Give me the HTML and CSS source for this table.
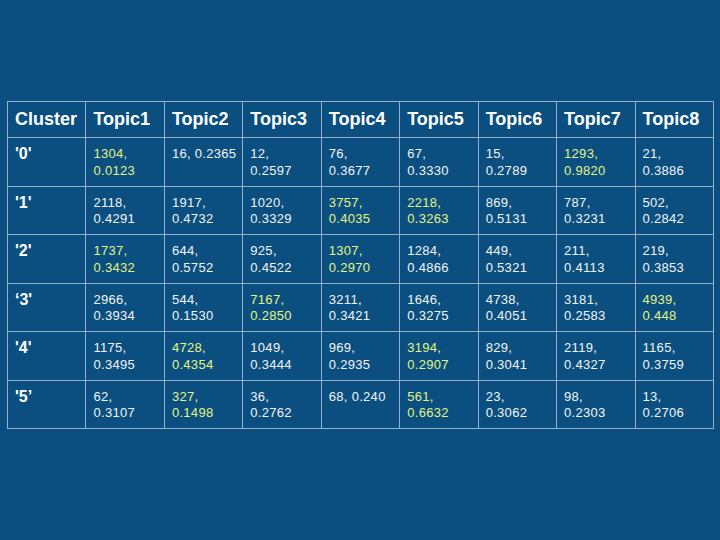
FILE: index.html
```html
<!DOCTYPE html>
<html>
<head>
<meta charset="utf-8">
<link rel="stylesheet" href="styles.css">
</head>
<body>
<div class="slide">
  <table class="grid">
    <thead>
      <tr>
        <th>Cluster</th><th>Topic1</th><th>Topic2</th><th>Topic3</th><th>Topic4</th><th>Topic5</th><th>Topic6</th><th>Topic7</th><th>Topic8</th>
      </tr>
    </thead>
    <tbody>
      <tr>
        <th class="label">'0'</th>
        <td class="hi">1304,<br>0.0123</td>
        <td>16, 0.2365</td>
        <td>12,<br>0.2597</td>
        <td>76,<br>0.3677</td>
        <td>67,<br>0.3330</td>
        <td>15,<br>0.2789</td>
        <td class="hi">1293,<br>0.9820</td>
        <td>21,<br>0.3886</td>
      </tr>
      <tr>
        <th class="label">'1'</th>
        <td>2118,<br>0.4291</td>
        <td>1917,<br>0.4732</td>
        <td>1020,<br>0.3329</td>
        <td class="hi">3757,<br>0.4035</td>
        <td class="hi">2218,<br>0.3263</td>
        <td>869,<br>0.5131</td>
        <td>787,<br>0.3231</td>
        <td>502,<br>0.2842</td>
      </tr>
      <tr>
        <th class="label">'2'</th>
        <td class="hi">1737,<br>0.3432</td>
        <td>644,<br>0.5752</td>
        <td>925,<br>0.4522</td>
        <td class="hi">1307,<br>0.2970</td>
        <td>1284,<br>0.4866</td>
        <td>449,<br>0.5321</td>
        <td>211,<br>0.4113</td>
        <td>219,<br>0.3853</td>
      </tr>
      <tr>
        <th class="label">‘3'</th>
        <td>2966,<br>0.3934</td>
        <td>544,<br>0.1530</td>
        <td class="hi">7167,<br>0.2850</td>
        <td>3211,<br>0.3421</td>
        <td>1646,<br>0.3275</td>
        <td>4738,<br>0.4051</td>
        <td>3181,<br>0.2583</td>
        <td class="hi">4939,<br>0.448</td>
      </tr>
      <tr>
        <th class="label">'4'</th>
        <td>1175,<br>0.3495</td>
        <td class="hi">4728,<br>0.4354</td>
        <td>1049,<br>0.3444</td>
        <td>969,<br>0.2935</td>
        <td class="hi">3194,<br>0.2907</td>
        <td>829,<br>0.3041</td>
        <td>2119,<br>0.4327</td>
        <td>1165,<br>0.3759</td>
      </tr>
      <tr>
        <th class="label">'5’</th>
        <td>62,<br>0.3107</td>
        <td class="hi">327,<br>0.1498</td>
        <td>36,<br>0.2762</td>
        <td>68, 0.240</td>
        <td class="hi">561,<br>0.6632</td>
        <td>23,<br>0.3062</td>
        <td>98,<br>0.2303</td>
        <td>13,<br>0.2706</td>
      </tr>
    </tbody>
  </table>
</div>
</body>
</html>
```
FILE: styles.css
```css
html, body {
  margin: 0;
  padding: 0;
  background: #0b4f80;
}
.slide {
  width: 720px;
  height: 540px;
  box-sizing: border-box;
  padding: 101px 0 0 7px;
  background: #0b4f80;
  font-family: "Liberation Sans", Arial, sans-serif;
  color: #f2f4f6;
}
.grid {
  border-collapse: collapse;
  table-layout: fixed;
  width: 707px;
}
.grid th,
.grid td {
  border: 1px solid #94b0cc;
  padding: 0 4px 0 7px;
  text-align: left;
}
.grid thead th {
  height: 35px;
  font-size: 18px;
  font-weight: bold;
  vertical-align: middle;
  color: #ffffff;
}
.grid tbody tr {
  height: 48.5px;
}
.grid tbody td,
.grid tbody th {
  vertical-align: top;
  padding-top: 8px;
  font-size: 13px;
  line-height: 16.5px;
  font-weight: normal;
  letter-spacing: 0.3px;
}
.grid tbody th.label {
  font-size: 16px;
  font-weight: bold;
  line-height: 16.5px;
  letter-spacing: 0;
  color: #ffffff;
}
.grid td.hi {
  color: #e2f484;
}
```
